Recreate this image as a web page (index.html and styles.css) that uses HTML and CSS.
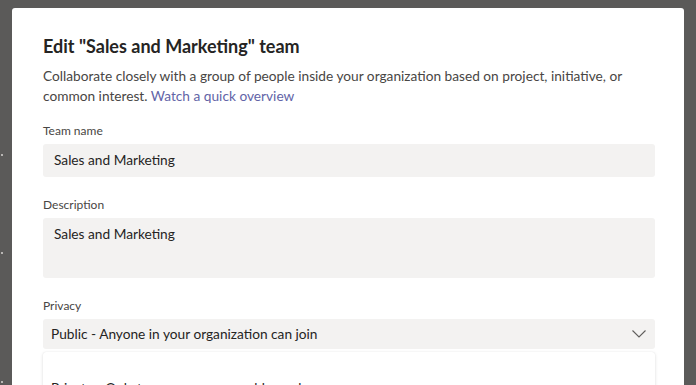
FILE: index.html
```html
<!DOCTYPE html>
<html lang="en">
<head>
<meta charset="utf-8">
<title>Edit team</title>
<link rel="stylesheet" href="styles.css">
</head>
<body>
<span class="bg-dot dot-1"></span>
<span class="bg-dot dot-2"></span>
<span class="bg-dot dot-3"></span>
<div class="dialog">
  <h1 class="title">Edit "Sales and Marketing" team</h1>
  <p class="intro">Collaborate closely with a group of people inside your organization based on project, initiative, or common interest. <a class="link" href="#">Watch a quick overview</a></p>

  <div class="field">
    <label class="label">Team name</label>
    <div class="input">Sales and Marketing</div>
  </div>

  <div class="field">
    <label class="label">Description</label>
    <div class="input textarea">Sales and Marketing</div>
  </div>

  <div class="field">
    <label class="label">Privacy</label>
    <div class="select">
      <span>Public - Anyone in your organization can join</span>
      <svg class="chevron" width="14" height="8" viewBox="0 0 14 8"><polyline points="0.5,0.5 7,7 13.5,0.5" fill="none" stroke="#605e5c" stroke-width="1.1"/></svg>
    </div>
    <div class="menu">
      <div class="menu-item">Private - Only team owners can add members</div>
    </div>
  </div>
</div>
</body>
</html>
```
FILE: styles.css
```css
html, body {
  margin: 0;
  padding: 0;
}
body {
  background: #5b5a59;
  height: 385px;
  overflow: hidden;
  font-family: "Lato", "Open Sans", sans-serif;
  position: relative;
}
.bg-dot {
  position: absolute;
  left: 1px;
  width: 2px;
  height: 2px;
  background: #b8b6b4;
}
.dot-1 { top: 154px; }
.dot-2 { top: 252px; }
.dot-3 { top: 381px; }

.dialog {
  margin: 8px 12px 0 12px;
  background: #ffffff;
  border-radius: 3px 3px 0 0;
  padding: 26px 29px 0 31px;
  height: 420px;
  box-sizing: border-box;
}
.title {
  margin: 0;
  font-size: 18px;
  line-height: 24px;
  font-weight: 700;
  color: #252423;
}
.intro {
  margin: 8px 0 0 0;
  font-size: 13.7px;
  line-height: 20px;
  color: #484644;
}
.link {
  color: #6264a7;
  text-decoration: none;
}
.field {
  display: flex;
  flex-direction: column;
  margin-top: 17px;
}
.field + .field {
  margin-top: 20px;
}
.label {
  font-size: 12px;
  line-height: 16px;
  color: #484644;
  margin-bottom: 5px;
}
.input {
  background: #f3f2f1;
  border-radius: 3px;
  height: 33px;
  box-sizing: border-box;
  padding: 6px 11px;
  font-size: 13.7px;
  line-height: 20px;
  color: #252423;
}
.textarea {
  height: 60px;
}
.select {
  background: #f3f2f1;
  border-radius: 3px;
  height: 30px;
  box-sizing: border-box;
  padding: 0 9px 0 8px;
  display: flex;
  align-items: center;
  justify-content: space-between;
  font-size: 13.7px;
  line-height: 20px;
  color: #252423;
}
.chevron {
  display: block;
}
.menu {
  margin-top: 3px;
  background: #ffffff;
  border-radius: 3px;
  box-shadow: 0 1.6px 3.6px rgba(0,0,0,0.13), 0 0.3px 0.9px rgba(0,0,0,0.11);
  padding: 26px 8px 10px 8px;
  height: 80px;
  box-sizing: border-box;
}
.menu-item {
  font-size: 13.7px;
  line-height: 20px;
  color: #252423;
}
```
